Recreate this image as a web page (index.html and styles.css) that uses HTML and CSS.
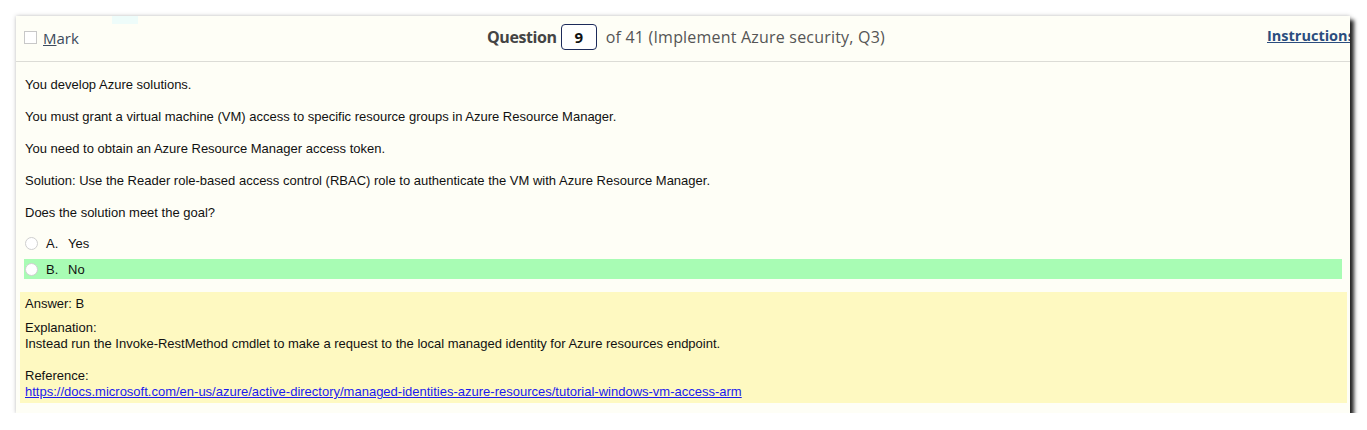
FILE: index.html
```html
<!DOCTYPE html>
<html>
<head>
<meta charset="utf-8">
<link rel="stylesheet" href="styles.css">
</head>
<body>
<div class="panel">
  <div class="tab-mark"></div>
  <div class="header">
    <label class="mark"><span class="checkbox"></span><span class="mark-text"><u>M</u>ark</span></label>
    <div class="question">
      <span class="q-label">Question</span>
      <span class="q-num">9</span>
      <span class="q-of">of 41 (Implement Azure security, Q3)</span>
    </div>
    <a class="instructions" href="#">Instructions</a>
  </div>
  <div class="body">
    <p>You develop Azure solutions.</p>
    <p>You must grant a virtual machine (VM) access to specific resource groups in Azure Resource Manager.</p>
    <p>You need to obtain an Azure Resource Manager access token.</p>
    <p>Solution: Use the Reader role-based access control (RBAC) role to authenticate the VM with Azure Resource Manager.</p>
    <p>Does the solution meet the goal?</p>
    <div class="options">
      <div class="option"><span class="radio"></span><span class="letter">A.</span><span>Yes</span></div>
      <div class="option correct"><span class="radio"></span><span class="letter">B.</span><span>No</span></div>
    </div>
  </div>
  <div class="answer">
    <div class="ans-line">Answer: B</div>
    <div class="expl">Explanation:<br>Instead run the Invoke-RestMethod cmdlet to make a request to the local managed identity for Azure resources endpoint.<br><br>Reference:<br><a href="#">https://docs.microsoft.com/en-us/azure/active-directory/managed-identities-azure-resources/tutorial-windows-vm-access-arm</a></div>
  </div>
</div>
</body>
</html>
```
FILE: styles.css
```css
html, body {
  margin: 0;
  padding: 0;
  background: #ffffff;
}
body {
  padding: 16px 0 0 16px;
  font-family: "Liberation Sans", Arial, sans-serif;
}
.panel {
  position: relative;
  width: 1334px;
  height: 397px;
  background: #fefef6;
  box-shadow: 0 0 4px rgba(0,0,0,0.25), 4px 4px 4px rgba(0,0,0,0.85);
  overflow: hidden;
}
.tab-mark {
  position: absolute;
  left: 96px;
  top: 0;
  width: 26px;
  height: 8px;
  background: #eefcfa;
}
.header {
  height: 45px;
  border-bottom: 1px solid #dcdcd6;
  display: flex;
  align-items: center;
  position: relative;
  font-family: "Open Sans", "Noto Sans", sans-serif;
}
.mark {
  display: flex;
  align-items: center;
  margin-left: 8px;
  margin-top: -2px;
  color: #3c4a5c;
  font-size: 15px;
}
.checkbox {
  width: 11px;
  height: 11px;
  border: 1px solid #c8c8c8;
  background: #fff;
  margin-right: 6px;
}
.question {
  position: absolute;
  left: 471px;
  top: 8px;
  display: flex;
  align-items: center;
  font-size: 16px;
  color: #555;
}
.q-label {
  font-weight: bold;
  color: #444;
  letter-spacing: -0.4px;
}
.q-num {
  width: 34px;
  height: 24px;
  border: 1px solid #1c2a5a;
  border-radius: 4px;
  display: flex;
  align-items: center;
  justify-content: center;
  font-weight: bold;
  color: #111;
  font-size: 15px;
  margin: 0 9px 0 4px;
  background: #fff;
}
.q-of {
  letter-spacing: 0.2px;
}
.instructions {
  position: absolute;
  left: 1251px;
  top: 10px;
  font-weight: bold;
  font-size: 14.5px;
  color: #2b4d7e;
  white-space: nowrap;
}
.body {
  padding: 15px 0 0 9px;
  font-size: 13px;
  color: #111;
}
.body p {
  margin: 0 0 17px 0;
  line-height: 15px;
}
.options {
  margin-top: -4px;
}
.option {
  display: flex;
  align-items: center;
  height: 20px;
  margin-left: -1px;
  margin-right: 8px;
  padding-left: 1px;
  margin-bottom: 6px;
}
.option.correct {
  background: #a8fcb4;
}
.radio {
  width: 11px;
  height: 11px;
  border: 1px solid #cfcfcf;
  border-radius: 50%;
  background: #fff;
  margin-right: 8px;
}
.letter {
  width: 22px;
}
.answer {
  position: absolute;
  left: 4px;
  right: 3px;
  top: 276px;
  height: 111px;
  background: #fef9c1;
  padding: 4px 0 0 5px;
  box-sizing: border-box;
  font-size: 13px;
  color: #111;
}
.ans-line {
  line-height: 16px;
  margin-bottom: 8px;
}
.expl {
  line-height: 16px;
}
.expl a {
  color: #1a1aee;
}
```
